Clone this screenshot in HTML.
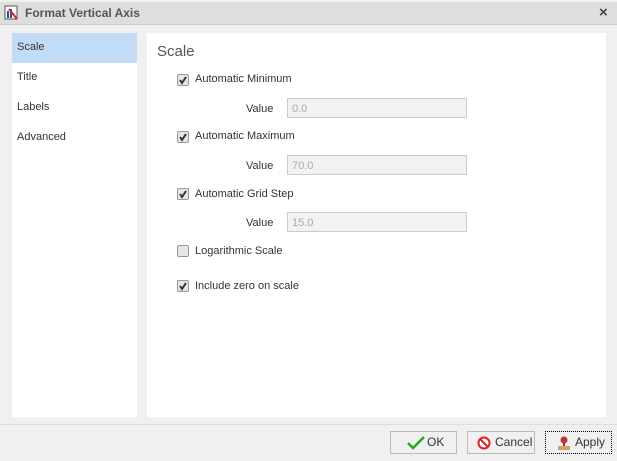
<!DOCTYPE html><html><head><style>
body{margin:0;width:617px;height:461px;background:#f0f0f0;font-family:"Liberation Sans",sans-serif;font-size:11px;color:#333;position:relative;overflow:hidden}
.a{position:absolute}
.tb{left:0;top:2px;width:617px;height:22px;background:#dedede;border-bottom:1px solid #cfcfcf}
.nav{left:12px;top:33px;width:125px;height:384px;background:#fff}
.nav div{height:30px;line-height:28px;padding-left:5px}
.main{left:147px;top:33px;width:459px;height:384px;background:#fff}
.cb{width:10px;height:10px;border:1px solid #999;background:#e6e6e6;border-radius:2px}
.inp{height:20px;border:1px solid #ccc;background:#f2f2f2;color:#aaa;line-height:20px;padding-left:4px;box-sizing:border-box;width:180px}
.btn{height:23px;border:1px solid #bbb;background:#f0f0f0;box-sizing:border-box;line-height:21px;font-size:12px}
</style></head><body>
<div class="a tb"></div>
<svg class="a" style="left:4px;top:5px" width="15" height="16"><rect x="1" y="1" width="12" height="13" fill="#fff" stroke="#555"/><rect x="3" y="6" width="2" height="7" fill="#2a4a9a"/><rect x="6" y="4" width="2" height="9" fill="#2a4a9a"/><path d="M5 4 L13 14" stroke="#d22" stroke-width="2"/></svg>
<div class="a" style="left:25px;top:6px;font-weight:bold;font-size:12px;color:#555">Format Vertical Axis</div>
<div class="a" style="left:599px;top:4px;font-size:15px;font-weight:bold;color:#444">×</div>
<div class="a nav"><div style="background:#c2dcf7">Scale</div><div>Title</div><div>Labels</div><div>Advanced</div></div>
<div class="a main"></div>
<div class="a" style="left:157px;top:43px;font-size:15px;color:#555">Scale</div>
<div class="a cb" style="left:177px;top:74px"></div><svg class="a" style="left:177px;top:74px" width="12" height="12"><path d="M3 6 L5 9 L9 3" stroke="#333" stroke-width="2" fill="none"/></svg><div class="a" style="left:195px;top:73px">Automatic Minimum</div>
<div class="a" style="left:246px;top:103px">Value</div><div class="a inp" style="left:287px;top:98px">0.0</div>
<div class="a cb" style="left:177px;top:131px"></div><svg class="a" style="left:177px;top:131px" width="12" height="12"><path d="M3 6 L5 9 L9 3" stroke="#333" stroke-width="2" fill="none"/></svg><div class="a" style="left:195px;top:130px">Automatic Maximum</div>
<div class="a" style="left:246px;top:160px">Value</div><div class="a inp" style="left:287px;top:155px">70.0</div>
<div class="a cb" style="left:177px;top:188px"></div><svg class="a" style="left:177px;top:188px" width="12" height="12"><path d="M3 6 L5 9 L9 3" stroke="#333" stroke-width="2" fill="none"/></svg><div class="a" style="left:195px;top:188px">Automatic Grid Step</div>
<div class="a" style="left:246px;top:217px">Value</div><div class="a inp" style="left:287px;top:212px">15.0</div>
<div class="a cb" style="left:177px;top:245px"></div><div class="a" style="left:195px;top:245px">Logarithmic Scale</div>
<div class="a cb" style="left:177px;top:280px"></div><svg class="a" style="left:177px;top:280px" width="12" height="12"><path d="M3 6 L5 9 L9 3" stroke="#333" stroke-width="2" fill="none"/></svg><div class="a" style="left:195px;top:280px">Include zero on scale</div>
<div class="a" style="left:0;top:424px;width:617px;height:1px;background:#ddd"></div>
<div class="a btn" style="left:390px;top:431px;width:67px"><svg class="a" style="left:15px;top:4px" width="20" height="14"><path d="M2 7 L7 12 L18 1" stroke="#2a2" stroke-width="2.5" fill="none"/></svg><span class="a" style="left:36px">OK</span></div>
<div class="a btn" style="left:467px;top:431px;width:68px"><svg class="a" style="left:9px;top:4px" width="14" height="14"><circle cx="7" cy="7" r="5.5" fill="#fff" stroke="#d22" stroke-width="2"/><path d="M3 3 L11 11" stroke="#d22" stroke-width="2"/></svg><span class="a" style="left:27px">Cancel</span></div>
<div class="a btn" style="left:545px;top:431px;width:67px;border:1px dotted #000"><svg class="a" style="left:10px;top:3px" width="16" height="16"><circle cx="8" cy="5" r="3.5" fill="#b33"/><rect x="7" y="8" width="2" height="3" fill="#933"/><rect x="2" y="11" width="12" height="4" fill="#d9a060"/></svg><span class="a" style="left:29px">Apply</span></div>
</body></html>
